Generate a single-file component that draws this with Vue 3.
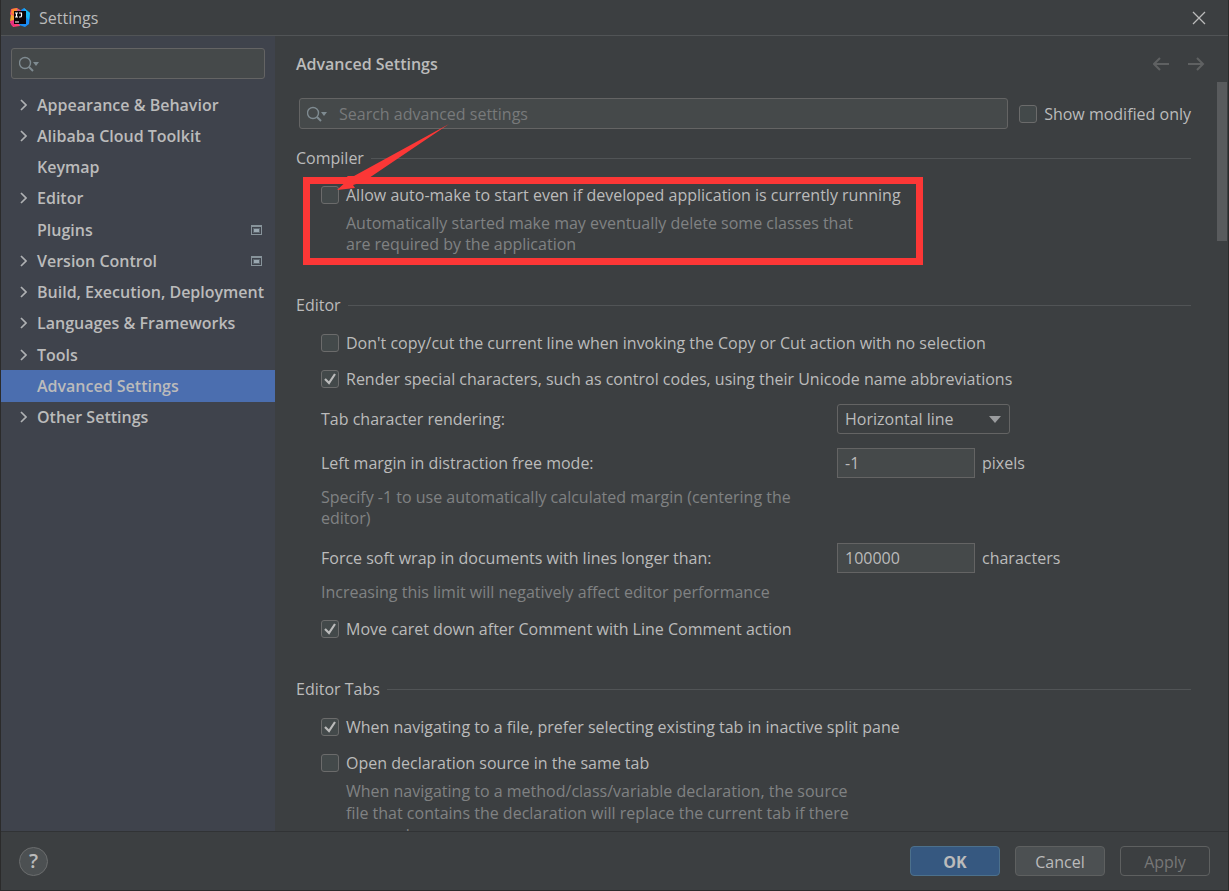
<script setup>
import { ref } from 'vue'

const nav = [
  { label: 'Appearance & Behavior', expandable: true },
  { label: 'Alibaba Cloud Toolkit', expandable: true },
  { label: 'Keymap' },
  { label: 'Editor', expandable: true },
  { label: 'Plugins', project: true },
  { label: 'Version Control', expandable: true, project: true },
  { label: 'Build, Execution, Deployment', expandable: true },
  { label: 'Languages & Frameworks', expandable: true },
  { label: 'Tools', expandable: true },
  { label: 'Advanced Settings', current: true },
  { label: 'Other Settings', expandable: true }
]

const navQuery = ref('')
const query = ref('')
const modifiedOnly = ref(false)
const autoMake = ref(false)
const noCopy = ref(false)
const renderSpecial = ref(true)
const tabRendering = ref('Horizontal line')
const leftMargin = ref('-1')
const softWrap = ref('100000')
const moveCaret = ref(true)
const preferTab = ref(true)
const sameTab = ref(false)
</script>

<template>
  <div class="window">
    <header class="titlebar">
      <svg class="logo" width="20" height="20" viewBox="0 0 20 20" aria-hidden="true">
        <path d="M1 1L7 0L13 4L10 18L3 19L0 14L3 10L0 6Z" fill="#fe3d72" />
        <path d="M2 1L7 0L9 4L4 7L1 5Z" fill="#fc8a2c" />
        <path d="M1 6L4 8L4 12L0 13Z" fill="#f7a532" />
        <path d="M0 14L4 12L5 18L2 18Z" fill="#e9317e" />
        <path d="M11 2L14 0L20 5L19 16L15 19L9 17L12 8Z" fill="#1a8cf5" />
        <path d="M14 0L20 5L19 12L16 9Z" fill="#17b8f5" />
        <path d="M7 1L10 2L12 5L7 5Z" fill="#c65b90" />
        <path d="M4 3H16V16H4Z" fill="#0b0407" />
        <path d="M5 5H8M6.500 5V9M5 9H8M9 5H12M11.500 5V8Q11.500 9 10 9H9M5 14H9" fill="none" stroke="#fff" stroke-width="1.200" />
      </svg>
      <span class="title">Settings</span>
      <button class="close" type="button" aria-label="Close">
        <svg width="14" height="14" viewBox="0 0 14 14"><path d="M1 1L13 13M13 1L1 13" stroke="#bbb" stroke-width="1.300" /></svg>
      </button>
    </header>

    <div class="body">
      <aside class="sidebar">
        <label class="search">
          <svg width="22" height="18" viewBox="0 0 22 18" aria-hidden="true">
            <circle cx="6" cy="8" r="5.500" fill="none" stroke="#7f8b91" stroke-width="1.400" />
            <path d="M10 12L14 16" stroke="#7f8b91" stroke-width="2" />
            <path d="M14 7H20L17 11Z" fill="#7f8b91" />
          </svg>
          <input v-model="navQuery" type="text" aria-label="Search settings" />
        </label>
        <nav class="tree">
          <a v-for="item in nav" :key="item.label" href="#" class="node" :class="{ current: item.current }">
            <span class="arrow">
              <svg v-if="item.expandable" width="8" height="12" viewBox="0 0 8 12"><path d="M2 1L7 6L2 11" fill="none" stroke="#afb1b3" stroke-width="1.700" /></svg>
            </span>
            <span class="node-label">{{ item.label }}</span>
            <svg v-if="item.project" width="11" height="10" viewBox="0 0 11 10"><path d="M0 0H11V10H0ZM1 2V9H10V2Z" fill="#87939a" fill-rule="evenodd" /><path d="M2 3H9V8H2Z" fill="#5d676f" /><path d="M3 4H8V7H3Z" fill="#9aa7b0" /></svg>
          </a>
        </nav>
      </aside>

      <main class="main">
        <div class="heading">
          <h1>Advanced Settings</h1>
          <button type="button" aria-label="Back"><svg width="18" height="14" viewBox="0 0 18 14"><path d="M16 7H1M7 1L1 7L7 13" fill="none" stroke="#5f6162" stroke-width="2" /></svg></button>
          <button type="button" aria-label="Forward"><svg width="18" height="14" viewBox="0 0 18 14"><path d="M1 7H16M10 1L16 7L10 13" fill="none" stroke="#5f6162" stroke-width="2" /></svg></button>
        </div>

        <div class="scroll">
          <div class="filter">
            <label class="search">
              <svg width="22" height="18" viewBox="0 0 22 18" aria-hidden="true">
                <circle cx="6" cy="8" r="5.500" fill="none" stroke="#7f8b91" stroke-width="1.400" />
                <path d="M10 12L14 16" stroke="#7f8b91" stroke-width="2" />
                <path d="M14 7H20L17 11Z" fill="#7f8b91" />
              </svg>
              <input v-model="query" type="text" placeholder="Search advanced settings" aria-label="Search advanced settings" />
            </label>
            <label class="check"><input v-model="modifiedOnly" type="checkbox" /><span>Show modified only</span></label>
          </div>

          <section class="compiler">
            <h2>Compiler</h2>
            <div class="options">
              <label class="check"><input v-model="autoMake" type="checkbox" /><span>Allow auto-make to start even if developed application is currently running</span></label>
              <p class="hint indented">Automatically started make may eventually delete some classes that are required by the application</p>
              <div class="callout"></div>
              <svg class="pointer" width="116" height="68" viewBox="0 0 116 68" aria-hidden="true">
                <path d="M112 1L32 55Q26 59 16 62L18 65L0 67L12 56L10 53L17 53Z" fill="#fc3736" />
              </svg>
            </div>
          </section>

          <section class="editor">
            <h2>Editor</h2>
            <div class="options">
              <label class="check"><input v-model="noCopy" type="checkbox" /><span>Don't copy/cut the current line when invoking the Copy or Cut action with no selection</span></label>
              <label class="check"><input v-model="renderSpecial" type="checkbox" /><span>Render special characters, such as control codes, using their Unicode name abbreviations</span></label>
              <div class="field">
                <label for="tab-rendering">Tab character rendering:</label>
                <span class="select">
                  <select id="tab-rendering" v-model="tabRendering"><option>Horizontal line</option></select>
                  <svg width="12" height="7" viewBox="0 0 12 7" aria-hidden="true"><path d="M0 0H12L6 7Z" fill="#9a9c9e" /></svg>
                </span>
              </div>
              <div class="field">
                <label for="left-margin">Left margin in distraction free mode:</label>
                <input id="left-margin" v-model="leftMargin" type="text" />
                <span>pixels</span>
              </div>
              <p class="hint margin-hint">Specify -1 to use automatically calculated margin (centering the editor)</p>
              <div class="field">
                <label for="soft-wrap">Force soft wrap in documents with lines longer than:</label>
                <input id="soft-wrap" v-model="softWrap" type="text" />
                <span>characters</span>
              </div>
              <p class="hint wrap-hint">Increasing this limit will negatively affect editor performance</p>
              <label class="check"><input v-model="moveCaret" type="checkbox" /><span>Move caret down after Comment with Line Comment action</span></label>
            </div>
          </section>

          <section class="tabs">
            <h2>Editor Tabs</h2>
            <div class="options">
              <label class="check"><input v-model="preferTab" type="checkbox" /><span>When navigating to a file, prefer selecting existing tab in inactive split pane</span></label>
              <label class="check"><input v-model="sameTab" type="checkbox" /><span>Open declaration source in the same tab</span></label>
              <p class="hint indented">When navigating to a method/class/variable declaration, the source file that contains the declaration will replace the current tab if there are no changes</p>
            </div>
          </section>
          <div class="thumb"></div>
        </div>
      </main>
    </div>

    <footer class="footer">
      <button class="help" type="button" aria-label="Help">?</button>
      <button class="btn primary" type="button">OK</button>
      <button class="btn" type="button">Cancel</button>
      <button class="btn" type="button" disabled>Apply</button>
    </footer>
  </div>
</template>

<style>
body {
  background: #3c3f41;
}
</style>

<style scoped>
* {
  box-sizing: border-box;
}
.window {
  display: flex;
  flex-direction: column;
  height: 100vh;
  border: 1px solid #2b2b2b;
  border-top: 0;
  background: #3c3f41;
  color: #bbb;
  font: 16px/22px "Open Sans", "Noto Sans", sans-serif;
}
button,
input,
select {
  margin: 0;
  padding: 0;
  border: 0;
  background: none;
  color: inherit;
  font: inherit;
}
svg {
  display: block;
  flex: none;
}
.titlebar {
  display: flex;
  flex: none;
  align-items: center;
  height: 36px;
  padding: 0 22px 0 9px;
  border-bottom: 1px solid #515456;
}
.title {
  flex: 1;
  margin-left: 9px;
}
.body {
  display: flex;
  flex: 1;
  min-height: 0;
}
.sidebar {
  flex: none;
  width: 274px;
  padding-top: 12px;
  background: #3f434c;
}
.search {
  display: flex;
  align-items: center;
  height: 31px;
  padding-left: 7px;
  border: 1px solid #646464;
  border-radius: 3px;
  background: #45494a;
}
.search input {
  flex: 1;
  min-width: 0;
  height: 28px;
  margin-left: 10px;
  outline: 0;
}
.search input::placeholder {
  color: #787a7b;
  opacity: 1;
}
.sidebar .search {
  margin: 0 10px;
}
.tree {
  display: flex;
  flex-direction: column;
  height: 344px;
  margin-top: 10px;
}
.node {
  display: flex;
  flex: 1;
  align-items: center;
  padding: 0 13px 0 18px;
  color: #bbb;
  font-weight: 600;
  text-decoration: none;
  white-space: nowrap;
}
.node.current {
  background: #4b6eaf;
}
.arrow {
  flex: none;
  width: 18px;
}
.node-label {
  flex: 1;
}
.main {
  display: flex;
  flex: 1;
  flex-direction: column;
  min-width: 0;
}
.heading {
  display: flex;
  flex: none;
  align-items: center;
  gap: 16px;
  height: 46px;
  padding: 10px 23px 0 21px;
}
h1 {
  flex: 1;
  margin: 0;
  font-size: 16px;
  font-weight: 600;
}
.scroll {
  position: relative;
  flex: 1;
  min-height: 0;
  padding: 16px 37px 0 21px;
  overflow: hidden;
}
.filter {
  display: flex;
  align-items: center;
  gap: 11px;
  padding-left: 3px;
}
.filter .search {
  flex: 1;
}
h2 {
  display: flex;
  align-items: center;
  gap: 7px;
  margin: 0;
  font-size: 16px;
  font-weight: 400;
}
h2::after {
  flex: 1;
  height: 1px;
  background: #515456;
  content: "";
}
.options {
  position: relative;
  padding-left: 25px;
}
.check {
  display: flex;
  align-items: center;
  gap: 7px;
  height: 22px;
}
.check input {
  flex: none;
  width: 18px;
  height: 18px;
  border: 1px solid #6b6b6b;
  border-radius: 3px;
  background: #43494a;
  appearance: none;
}
.check input:checked {
  background: #43494a url("data:image/svg+xml,%3Csvg xmlns='http://www.w3.org/2000/svg' viewBox='0 0 16 16'%3E%3Cpath d='M3 8L7 12L13 3' fill='none' stroke='%23bbb' stroke-width='2.200'/%3E%3C/svg%3E") center / 16px 16px;
}
.hint {
  width: 500px;
  margin: 0;
  color: #808283;
}
.hint.indented {
  width: 540px;
  margin-top: 6px;
  padding-left: 25px;
}
.compiler {
  height: 147px;
  padding-top: 18px;
}
.compiler .options {
  padding-top: 15px;
}
.compiler .hint {
  margin-top: 7px;
  line-height: 21px;
}
.callout {
  position: absolute;
  top: 8px;
  left: 7px;
  width: 620px;
  height: 88px;
  border: 7px solid #fc3736;
}
.pointer {
  position: absolute;
  top: -46px;
  left: 41px;
}
.editor .options {
  padding-top: 16px;
}
.editor {
  padding-top: 18px;
}
.tabs {
  padding-top: 38px;
}
.options .check + .check {
  margin-top: 14px;
}
.field {
  display: flex;
  align-items: center;
  gap: 7px;
  height: 30px;
  margin-top: 14px;
}
.field label {
  width: 509px;
}
.field > input {
  width: 138px;
  height: 30px;
  padding-left: 7px;
  border: 1px solid #646464;
  background: #45494a;
}
.select {
  position: relative;
}
.select select {
  width: 173px;
  height: 30px;
  padding-left: 7px;
  border: 1px solid #646464;
  border-radius: 3px;
  appearance: none;
}
.select svg {
  position: absolute;
  top: 12px;
  right: 9px;
  pointer-events: none;
}
.margin-hint {
  margin-top: 9px;
  line-height: 21px;
}
.wrap-hint {
  margin: 8px 0 15px;
}
.tabs .options {
  padding-top: 16px;
}
.thumb {
  position: absolute;
  top: 0;
  right: 1px;
  width: 10px;
  height: 159px;
  background: #595b5d;
}
.footer {
  display: flex;
  flex: none;
  align-items: center;
  gap: 15px;
  height: 59px;
  padding: 0 18px;
  border-top: 1px solid #313335;
}
.help {
  width: 29px;
  height: 29px;
  margin-right: auto;
  border: 1px solid #6b6d6e;
  border-radius: 50%;
  background: #4c5052;
  font-size: 20px;
  font-weight: 600;
}
.btn {
  width: 90px;
  height: 30px;
  padding-top: 2px;
  border: 1px solid #5e6060;
  border-radius: 4px;
  background: #4c5052;
}
.btn.primary {
  border-color: #4c708c;
  background: #365880;
  font-weight: 700;
}
.btn:disabled {
  background: none;
  color: #777;
}
</style>
